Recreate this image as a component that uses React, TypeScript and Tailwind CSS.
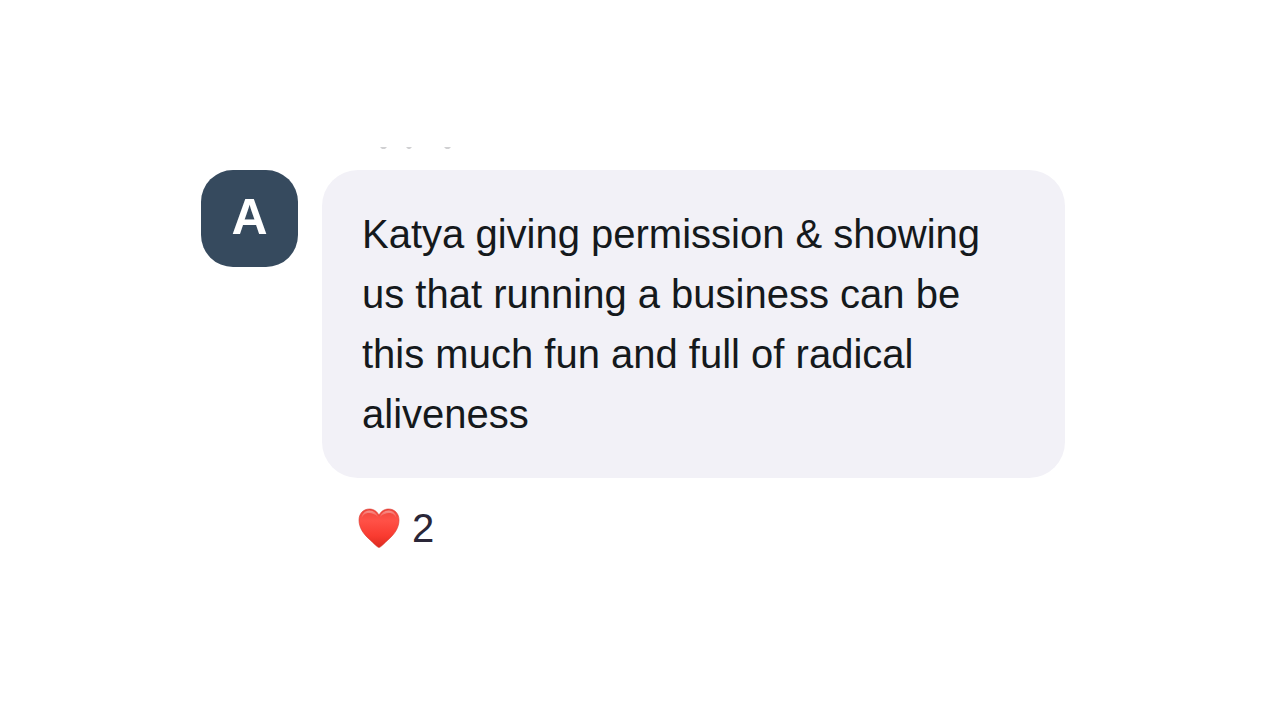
const message =
  "Katya giving permission & showing us that running a business can be this much fun and full of radical aliveness";

export default function App() {
  return (
    <main className="min-h-screen bg-white px-[201px] pt-[147px] font-['Liberation_Sans',Arial,sans-serif]">
      <PreviousLine />
      <article className="mt-[21px] flex items-start gap-6">
        <Avatar initial="A" />
        <div className="w-full max-w-[743px]">
          <p className="rounded-[36px] bg-[#f2f1f7] px-10 py-[34px] text-[40px] leading-[60px] text-[#15191c]">
            {message}
          </p>
          <Reaction count={2} />
        </div>
      </article>
    </main>
  );
}

/* Last visible sliver of the message scrolled off above */
function PreviousLine() {
  return (
    <svg
      viewBox="0 0 76 2"
      className="ml-[178px] block h-0.5 w-[76px]"
      fill="#d0d0d2"
      aria-hidden="true"
    >
      <path d="M1 0H8L6 2H3Z M27 0H33L31 2H29Z M65 0H72L70 2H67Z" />
    </svg>
  );
}

function Avatar({ initial }: { initial: string }) {
  return (
    <div className="flex size-[97px] shrink-0 items-center justify-center rounded-[32px] bg-[#364a5e] pb-0.5 text-[50px] font-bold text-white">
      {initial}
    </div>
  );
}

function Reaction({ count }: { count: number }) {
  return (
    <button className="mt-[26px] ml-9 flex items-center gap-3 text-[40px] leading-12 text-[#2a2638]">
      <Heart />
      <span>{count}</span>
    </button>
  );
}

function Heart() {
  return (
    <svg viewBox="0 0 42 40" className="h-10 w-[42px]" role="img" aria-label="Love">
      <defs>
        <linearGradient id="heart-fill" x1="0" y1="0" x2="0" y2="1">
          <stop offset="0" stopColor="#ee463c" />
          <stop offset="0.3" stopColor="#ff5147" />
          <stop offset="0.7" stopColor="#f93b30" />
          <stop offset="1" stopColor="#dc2a20" />
        </linearGradient>
        <linearGradient id="heart-shine" x1="0" y1="0" x2="0" y2="1">
          <stop offset="0" stopColor="#fff" stopOpacity="0.4" />
          <stop offset="1" stopColor="#fff" stopOpacity="0" />
        </linearGradient>
      </defs>
      <path
        d="M21 39.5C19.5 39.5 16 35.5 11 31C5 25.5 1 19.5 1 12C1 5.5 5.5 1 11.3 1C15.8 1 19.2 3.4 21 7.3C22.8 3.4 26.2 1 30.7 1C36.5 1 41 5.5 41 12C41 19.5 37 25.5 31 31C26 35.5 22.5 39.5 21 39.5Z"
        fill="url(#heart-fill)"
        stroke="#d9372d"
        strokeWidth="0.6"
      />
      <path
        d="M3.5 11C3.5 6 7 2.5 11.3 2.5C16 2.5 18.8 5.5 20 9C17 6 14 5 11 5C7 5 5 7 3.5 11Z M38.5 11C38.5 6 35 2.5 30.7 2.5C26 2.5 23.2 5.5 22 9C25 6 28 5 31 5C35 5 37 7 38.5 11Z"
        fill="url(#heart-shine)"
      />
    </svg>
  );
}
